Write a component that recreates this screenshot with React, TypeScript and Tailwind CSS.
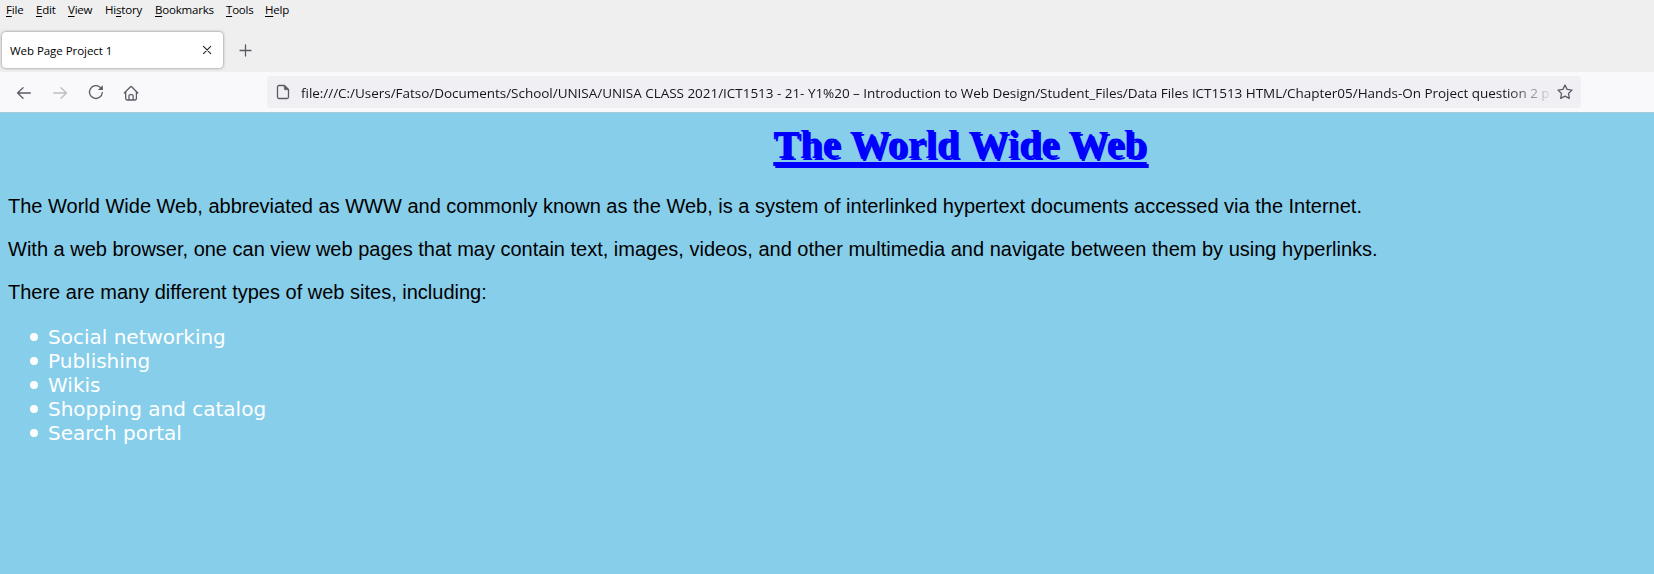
import type { ReactNode } from "react";

const menus: { before: string; key: string; after: string; width: string }[] = [
  { before: "", key: "F", after: "ile", width: "w-[30px]" },
  { before: "", key: "E", after: "dit", width: "w-8" },
  { before: "", key: "V", after: "iew", width: "w-[37px]" },
  { before: "Hi", key: "s", after: "tory", width: "w-[50px]" },
  { before: "", key: "B", after: "ookmarks", width: "w-[71px]" },
  { before: "", key: "T", after: "ools", width: "w-[39px]" },
  { before: "", key: "H", after: "elp", width: "w-[30px]" },
];

const sites = ["Social networking", "Publishing", "Wikis", "Shopping and catalog", "Search portal"];

function Icon({ children, className = "" }: { children: ReactNode; className?: string }) {
  return (
    <svg viewBox="0 0 16 16" className={`size-4 shrink-0 ${className}`} fill="none" stroke="currentColor" strokeWidth="1.3" strokeLinecap="round" strokeLinejoin="round">
      {children}
    </svg>
  );
}

export default function App() {
  return (
    <div className="flex h-[574px] w-[1654px] flex-col overflow-hidden bg-[#87ceeb] font-['Open_Sans','Noto_Sans',sans-serif]">
      <nav className="flex h-[26px] shrink-0 bg-[#efefef] pl-1.5 text-[11.5px] leading-[20px] tracking-[-0.2px] text-black">
        {menus.map((m) => (
          <span key={m.key + m.after} className={`${m.width} shrink-0 whitespace-nowrap`}>
            {m.before}
            <span className="underline underline-offset-2">{m.key}</span>
            {m.after}
          </span>
        ))}
      </nav>
      <div className="flex h-[46px] shrink-0 items-start bg-[#efefef] pt-1.5 pl-0.5">
        <div className="flex h-[36px] w-[221px] items-center justify-between rounded bg-white pr-2 pl-2 shadow-[0_0_3px_rgba(0,0,0,0.5)]">
          <span className="pt-px text-[11.5px] tracking-[-0.05px] text-black">Web Page Project 1</span>
          <Icon className="text-[#222]">
            <path d="M4.5 4.4 11.7 11.6M11.7 4.4 4.5 11.6" strokeWidth="1.1" />
          </Icon>
        </div>
        <Icon className="mt-2.5 ml-[14px] text-[#5b5b66]">
          <path d="M8.5 3v11M3 8.5h11" />
        </Icon>
      </div>
      <div className="flex h-[41px] shrink-0 items-center border-b border-[#a9cbd9] bg-[#f9f9fb] pl-4 text-[#5b5b66]">
        <Icon className="mt-px">
          <path d="M14.3 8H1.5M7 2.8 1.6 8 7 13.2" />
        </Icon>
        <Icon className="mt-px ml-5 text-[#bcbcc2]">
          <path d="M1.7 8h12.8M9 2.8 14.4 8 9 13.2" />
        </Icon>
        <Icon className="ml-5">
          <path d="M14.3 8.5A6.4 6.4 0 1 1 12.3 3.4L14 5" />
          <path d="M14.8 1.2v4.9H9.9z" fill="currentColor" stroke="none" />
        </Icon>
        <Icon className="mt-px ml-[19px]">
          <path d="M1.3 8 7.5 1.8a.8.8 0 0 1 1.1 0L14.8 8M2.7 7v6.6c0 .8.6 1.4 1.4 1.4h7.9c.8 0 1.4-.6 1.4-1.4V7M6 15v-4.2c0-.7.5-1.2 1.2-1.2h1.7c.7 0 1.2.5 1.2 1.2V15" />
        </Icon>
        <div className="ml-[128px] flex h-8 w-[1314px] items-center rounded bg-[#f0f0f4] pl-2">
          <Icon>
            <path d="M4 1.5h5.5l4 4V13a1.5 1.5 0 0 1-1.5 1.5H4A1.5 1.5 0 0 1 2.5 13V3A1.5 1.5 0 0 1 4 1.5z" />
            <path d="M9.3 1.5 13.5 5.7H10a.7.7 0 0 1-.7-.7z" fill="currentColor" strokeWidth=".6" />
          </Icon>
          <div className="ml-[10px] w-[1249px] overflow-hidden pt-0.5 text-[13.5px] leading-6 tracking-[-0.03px] whitespace-nowrap text-[#15141a] [mask-image:linear-gradient(to_right,black_1205px,transparent_1253px)]">
            file:///C:/Users/Fatso/Documents/School/UNISA/UNISA CLASS 2021/ICT1513 - 21- Y1%20 – Introduction to Web Design/Student_Files/Data Files ICT1513 HTML/Chapter05/Hands-On Project question 2 p
          </div>
          <Icon className="ml-[7px]">
            <path d="m8 1 2.1 4.4 4.9.7-3.5 3.4.8 4.9L8 12.1l-4.3 2.3.8-4.9L1 6.1l4.9-.7z" />
          </Icon>
        </div>
      </div>
      <main className="px-2">
        <h1 className="pt-[9px] pl-[266px] text-center font-['Liberation_Serif',serif] text-[40px] leading-[46px] font-bold tracking-[0.1px] text-[#0000ff] underline decoration-[4px] underline-offset-[4px] [text-decoration-skip-ink:none] [text-shadow:2px_2px_#0000ff]">
          The World Wide Web
        </h1>
        <div className="mt-[27px] flex flex-col gap-5 font-['Liberation_Sans',sans-serif] text-[20px] leading-[23px] whitespace-nowrap text-black">
          <p>The World Wide Web, abbreviated as WWW and commonly known as the Web, is a system of interlinked hypertext documents accessed via the Internet.</p>
          <p>With a web browser, one can view web pages that may contain text, images, videos, and other multimedia and navigate between them by using hyperlinks.</p>
          <p>There are many different types of web sites, including:</p>
        </div>
        <ul className="mt-[21px] pl-[22px] font-['DejaVu_Sans',sans-serif] text-[20px] leading-6 text-white">
          {sites.map((s) => (
            <li key={s} className="flex items-center gap-[10px]">
              <span className="size-2 shrink-0 rounded-full bg-white" />
              {s}
            </li>
          ))}
        </ul>
      </main>
    </div>
  );
}
